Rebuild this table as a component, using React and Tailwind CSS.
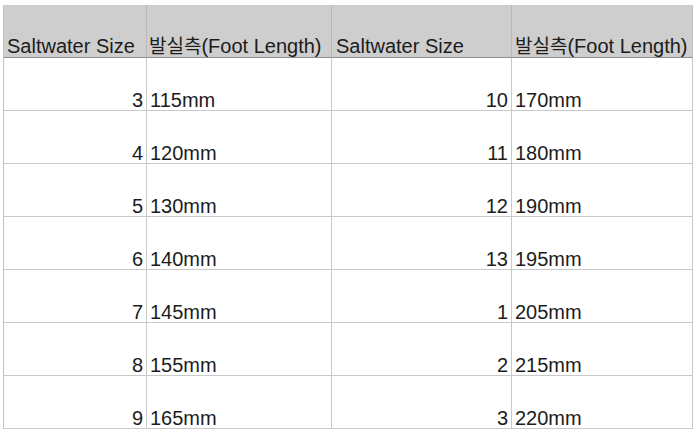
const rows = [
  ["3", "115mm", "10", "170mm"],
  ["4", "120mm", "11", "180mm"],
  ["5", "130mm", "12", "190mm"],
  ["6", "140mm", "13", "195mm"],
  ["7", "145mm", "1", "205mm"],
  ["8", "155mm", "2", "215mm"],
  ["9", "165mm", "3", "220mm"],
];

const font = { fontFamily: '"Liberation Sans", "Noto Sans CJK KR", Arial, sans-serif' };

function FootHeader() {
  return (
    <>
      <span className="text-[19px]">발실측</span>(Foot Length)
    </>
  );
}

export default function App() {
  return (
    <div className="w-[698px] h-[438px] bg-white pt-[5px] pl-[3px] text-[#1c1c1c]" style={font}>
      <div className="grid grid-cols-[143px_185px_180px_181px] w-[689px] border-l border-[#c4c4c4] text-[20px] leading-none">
        <div className="h-[53px] bg-[#cecece] border-b border-r border-b-[#8f8f8f] border-r-[#b8b8b8] flex items-end pl-[3px] pb-[1px] whitespace-nowrap">
          Saltwater Size
        </div>
        <div className="h-[53px] bg-[#cecece] border-b border-r border-b-[#8f8f8f] border-r-[#b8b8b8] flex items-end pl-[2px] pb-[1px] whitespace-nowrap">
          <FootHeader />
        </div>
        <div className="h-[53px] bg-[#cecece] border-b border-r border-b-[#8f8f8f] border-r-[#b8b8b8] flex items-end pl-[4px] pb-[1px] whitespace-nowrap">
          Saltwater Size
        </div>
        <div className="h-[53px] bg-[#cecece] border-b border-r border-b-[#8f8f8f] border-r-[#c4c4c4] flex items-end pl-[3px] pb-[1px] whitespace-nowrap">
          <FootHeader />
        </div>
        {rows.map((r, i) => (
          <div key={i} className="contents">
            <div className="h-[53px] border-b border-r border-[#c9c9c9] flex items-end justify-end pr-[3px]">{r[0]}</div>
            <div className="h-[53px] border-b border-r border-[#c9c9c9] flex items-end pl-[3px]">{r[1]}</div>
            <div className="h-[53px] border-b border-r border-[#c9c9c9] flex items-end justify-end pr-[3px]">{r[2]}</div>
            <div className="h-[53px] border-b border-r border-[#c9c9c9] flex items-end pl-[3px]">{r[3]}</div>
          </div>
        ))}
      </div>
    </div>
  );
}
